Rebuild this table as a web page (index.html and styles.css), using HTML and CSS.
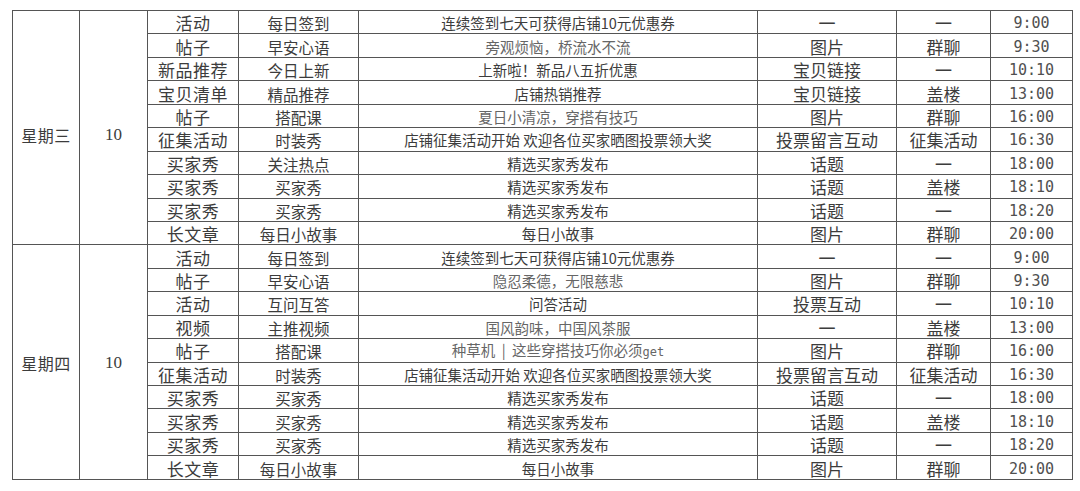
FILE: index.html
```html
<!DOCTYPE html>
<html lang="zh-CN">
<head>
<meta charset="utf-8">
<title>运营排期表</title>
<link rel="stylesheet" href="styles.css">
</head>
<body>
<table class="sched">
<colgroup>
<col class="c-day"><col class="c-num"><col class="c-type"><col class="c-name"><col class="c-text"><col class="c-form"><col class="c-act"><col class="c-time">
</colgroup>
<tbody>
<tr><td class="day" rowspan="10"><span class="d1">星期三</span></td><td class="num" rowspan="10"><span class="d1">10</span></td><td class="type">活动</td><td class="name">每日签到</td><td class="text">连续签到七天可获得店铺10元优惠券</td><td class="form">一</td><td class="act">一</td><td class="time">9:00</td></tr>
<tr><td class="type">帖子</td><td class="name">早安心语</td><td class="text lt">旁观烦恼，桥流水不流</td><td class="form">图片</td><td class="act">群聊</td><td class="time">9:30</td></tr>
<tr><td class="type">新品推荐</td><td class="name">今日上新</td><td class="text">上新啦！新品八五折优惠</td><td class="form">宝贝链接</td><td class="act">一</td><td class="time">10:10</td></tr>
<tr><td class="type">宝贝清单</td><td class="name">精品推荐</td><td class="text">店铺热销推荐</td><td class="form">宝贝链接</td><td class="act">盖楼</td><td class="time">13:00</td></tr>
<tr><td class="type">帖子</td><td class="name">搭配课</td><td class="text lt">夏日小清凉，穿搭有技巧</td><td class="form">图片</td><td class="act">群聊</td><td class="time">16:00</td></tr>
<tr><td class="type">征集活动</td><td class="name">时装秀</td><td class="text">店铺征集活动开始 欢迎各位买家晒图投票领大奖</td><td class="form">投票留言互动</td><td class="act">征集活动</td><td class="time">16:30</td></tr>
<tr><td class="type">买家秀</td><td class="name">关注热点</td><td class="text">精选买家秀发布</td><td class="form">话题</td><td class="act">一</td><td class="time">18:00</td></tr>
<tr><td class="type">买家秀</td><td class="name">买家秀</td><td class="text">精选买家秀发布</td><td class="form">话题</td><td class="act">盖楼</td><td class="time">18:10</td></tr>
<tr><td class="type">买家秀</td><td class="name">买家秀</td><td class="text">精选买家秀发布</td><td class="form">话题</td><td class="act">一</td><td class="time">18:20</td></tr>
<tr><td class="type">长文章</td><td class="name">每日小故事</td><td class="text">每日小故事</td><td class="form">图片</td><td class="act">群聊</td><td class="time">20:00</td></tr>

<tr><td class="day" rowspan="10">星期四</td><td class="num" rowspan="10">10</td><td class="type">活动</td><td class="name">每日签到</td><td class="text">连续签到七天可获得店铺10元优惠券</td><td class="form">一</td><td class="act">一</td><td class="time">9:00</td></tr>
<tr><td class="type">帖子</td><td class="name">早安心语</td><td class="text lt">隐忍柔德，无限慈悲</td><td class="form">图片</td><td class="act">群聊</td><td class="time">9:30</td></tr>
<tr><td class="type">活动</td><td class="name">互问互答</td><td class="text">问答活动</td><td class="form">投票互动</td><td class="act">一</td><td class="time">10:10</td></tr>
<tr><td class="type">视频</td><td class="name">主推视频</td><td class="text lt">国风韵味，中国风茶服</td><td class="form">一</td><td class="act">盖楼</td><td class="time">13:00</td></tr>
<tr><td class="type">帖子</td><td class="name">搭配课</td><td class="text lt">种草机 &nbsp;| &nbsp;这些穿搭技巧你必须<span class="get">get</span></td><td class="form">图片</td><td class="act">群聊</td><td class="time">16:00</td></tr>
<tr><td class="type">征集活动</td><td class="name">时装秀</td><td class="text">店铺征集活动开始 欢迎各位买家晒图投票领大奖</td><td class="form">投票留言互动</td><td class="act">征集活动</td><td class="time">16:30</td></tr>
<tr><td class="type">买家秀</td><td class="name">买家秀</td><td class="text">精选买家秀发布</td><td class="form">话题</td><td class="act">一</td><td class="time">18:00</td></tr>
<tr><td class="type">买家秀</td><td class="name">买家秀</td><td class="text">精选买家秀发布</td><td class="form">话题</td><td class="act">盖楼</td><td class="time">18:10</td></tr>
<tr><td class="type">买家秀</td><td class="name">买家秀</td><td class="text">精选买家秀发布</td><td class="form">话题</td><td class="act">一</td><td class="time">18:20</td></tr>
<tr><td class="type">长文章</td><td class="name">每日小故事</td><td class="text">每日小故事</td><td class="form">图片</td><td class="act">群聊</td><td class="time">20:00</td></tr>
</tbody>
</table>
</body>
</html>
```

FILE: styles.css
```css
html, body {
  margin: 0;
  padding: 0;
  background: #ffffff;
}

body {
  padding: 10px 0 0 12px;
  font-family: "Noto Sans CJK SC", "Noto Sans", sans-serif;
  color: #3c3c3c;
}

.sched {
  border-collapse: collapse;
  table-layout: fixed;
  width: 1060px;
}

.c-day { width: 67px; }
.c-num { width: 68px; }
.c-type { width: 91px; }
.c-name { width: 120px; }
.c-text { width: 399px; }
.c-form { width: 139px; }
.c-act { width: 94px; }
.c-time { width: 82px; }

.sched td {
  border: 1px solid #555555;
  height: 23.45px;
  padding: 2px 0 0 0;
  box-sizing: border-box;
  text-align: center;
  vertical-align: middle;
  line-height: 18px;
  white-space: nowrap;
  overflow: hidden;
}

.sched .day {
  font-size: 16px;
  letter-spacing: 0.5px;
}

.d1 {
  display: inline-block;
  padding-top: 12px;
}

.sched .num {
  font-family: "Liberation Serif", serif;
  font-size: 17px;
}

.sched .type {
  font-size: 17px;
  letter-spacing: 0.5px;
}

.sched .name {
  font-size: 15.5px;
}

.sched .text {
  font-size: 14.5px;
}

.sched .text.lt {
  color: #666666;
}

.get {
  font-family: "DejaVu Sans Mono", monospace;
  font-size: 12px;
}

.sched .form {
  font-size: 17px;
}

.sched .act {
  font-size: 17px;
}

.sched .time {
  font-family: "DejaVu Sans Mono", monospace;
  font-size: 15px;
  color: #505050;
}
```
